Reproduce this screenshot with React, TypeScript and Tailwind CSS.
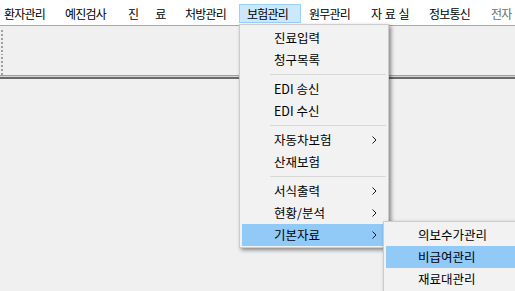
import React from "react";

const Chevron = () => (
  <svg width="5" height="8" viewBox="0 0 5 8" className="absolute right-[9px] top-[7px]">
    <polyline points="0.5,0.5 4,4 0.5,7.5" fill="none" stroke="#1a1a1a" strokeWidth="1" />
  </svg>
);

type Item = { label: string; arrow?: boolean; active?: boolean } | "sep";

const mainItems: Item[] = [
  { label: "진료입력" },
  { label: "청구목록" },
  "sep",
  { label: "EDI 송신" },
  { label: "EDI 수신" },
  "sep",
  { label: "자동차보험", arrow: true },
  { label: "산재보험" },
  "sep",
  { label: "서식출력", arrow: true },
  { label: "현황/분석", arrow: true },
  { label: "기본자료", arrow: true, active: true },
];

const subItems: Item[] = [
  { label: "의보수가관리" },
  { label: "비급여관리", active: true },
  { label: "재료대관리" },
];

function MenuList({ items }: { items: Item[] }) {
  return (
    <>
      {items.map((it, i) =>
        it === "sep" ? (
          <div key={i} className="h-[7px] flex items-center">
            <div className="ml-[28px] h-px flex-1 bg-[#d7d7d7]" />
          </div>
        ) : (
          <div
            key={i}
            className={
              "relative h-[22px] pl-[32px] leading-[22px] text-[12.5px] whitespace-nowrap " +
              (it.active ? "bg-[#91c9f7]" : "")
            }
          >
            {it.label}
            {it.arrow && <Chevron />}
          </div>
        )
      )}
    </>
  );
}

export default function App() {
  const bar: { label: React.ReactNode; w: string; pl: string; active?: boolean; gray?: boolean }[] = [
    { label: "환자관리", w: "w-[61px]", pl: "pl-[8px]" },
    { label: "예진검사", w: "w-[63px]", pl: "pl-[8px]" },
    {
      label: (
        <span className="flex">
          <span>진</span>
          <span className="ml-[17px]">료</span>
        </span>
      ),
      w: "w-[57px]",
      pl: "pl-[8px]",
    },
    { label: "처방관리", w: "w-[63px]", pl: "pl-[8px]" },
    { label: "보험관리", w: "w-[62px]", pl: "pl-[7px]", active: true },
    { label: "원무관리", w: "w-[61px]", pl: "pl-[7px]" },
    {
      label: (
        <span className="flex gap-[3.5px]">
          <span>자</span>
          <span>료</span>
          <span>실</span>
        </span>
      ),
      w: "w-[58px]",
      pl: "pl-[8px]",
    },
    { label: "정보통신", w: "w-[62px]", pl: "pl-[8px]" },
    { label: "전자", w: "w-[60px]", pl: "pl-[8px]", gray: true },
  ];

  return (
    <div className="relative w-[515px] h-[291px] overflow-hidden bg-[#f0f0f0] text-[12px] text-black font-['Noto_Sans_CJK_KR','Noto_Sans',sans-serif]">
      {/* menu bar */}
      <div className="h-[25px] bg-white flex items-start pt-[4px] ml-[-5px] whitespace-nowrap">
        {bar.map((b, i) => (
          <div
            key={i}
            className={
              "h-[19px] shrink-0 leading-[17px] tracking-[-0.75px] " +
              b.w +
              " " +
              b.pl +
              " " +
              (b.active ? "border border-[#99d1ff] bg-[#cce8ff] " : "border border-transparent ") +
              (b.gray ? "text-[#6d6d6d]" : "")
            }
          >
            {b.label}
          </div>
        ))}
      </div>
      <div className="h-px bg-[#a8a8a8]" />
      {/* toolbar */}
      <div className="h-[49px] flex flex-col gap-[2px] pt-[4px] pl-[1px]">
        {Array.from({ length: 12 }).map((_, i) => (
          <div key={i} className="w-[2px] h-[2px] bg-[#a0a0a0]" />
        ))}
      </div>
      <div className="h-px bg-[#a0a0a0]" />
      <div className="h-px bg-[#d4d4d4]" />
      <div className="h-[2px] bg-[#6a6a6a]" />

      {/* dropdown */}
      <div className="absolute left-[239px] top-[24px] w-[150px] h-[224px] bg-[#f2f2f2] border border-[#cccccc] pt-[2px] px-[2px] shadow-[2px_2px_4px_rgba(0,0,0,0.45)]">
        <MenuList items={mainItems} />
      </div>

      {/* submenu */}
      <div className="absolute left-[383px] top-[221px] w-[150px] h-[80px] bg-[#f2f2f2] border border-[#cccccc] pt-[2px] px-[2px] shadow-[2px_2px_4px_rgba(0,0,0,0.45)]">
        <MenuList items={subItems} />
      </div>
    </div>
  );
}
